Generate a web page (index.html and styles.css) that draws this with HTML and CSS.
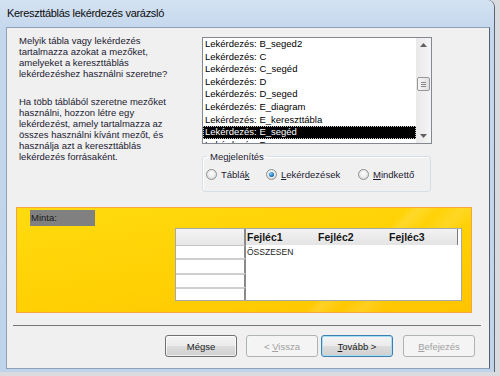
FILE: index.html
```html
<!DOCTYPE html>
<html lang="hu">
<head>
    <meta charset="UTF-8">
    <meta name="viewport" content="width=device-width, initial-scale=1.0">
    <title>Kereszttáblás lekérdezés varázsló</title>
    <link rel="stylesheet" href="styles.css">
</head>
<body>
    <div class="window">
        <div class="titlebar">Kereszttáblás lekérdezés varázsló</div>
        <div class="client">
            <div class="top">
                <div class="intro">
                    <p>Melyik tábla vagy lekérdezés<br>tartalmazza azokat a mezőket,<br>amelyeket a kereszttáblás<br>lekérdezéshez használni szeretne?</p>
                    <p>Ha több táblából szeretne mezőket<br>használni, hozzon létre egy<br>lekérdezést, amely tartalmazza az<br>összes használni kívánt mezőt, és<br>használja azt a kereszttáblás<br>lekérdezés forrásaként.</p>
                </div>
                <div class="side">
                    <div class="listbox">
                        <ul class="items">
                            <li>Lekérdezés: B_seged2</li>
                            <li>Lekérdezés: C</li>
                            <li>Lekérdezés: C_segéd</li>
                            <li>Lekérdezés: D</li>
                            <li>Lekérdezés: D_seged</li>
                            <li>Lekérdezés: E_diagram</li>
                            <li>Lekérdezés: E_kereszttábla</li>
                            <li class="selected">Lekérdezés: E_segéd</li>
                            <li>Lekérdezés: F</li>
                        </ul>
                        <div class="scrollbar">
                            <div class="arrow">
                                <svg width="7" height="4" viewBox="0 0 7 4"><path d="M0 4 L3.5 0 L7 4 Z" fill="#606060"/></svg>
                            </div>
                            <div class="track"><div class="thumb"><i></i><i></i><i></i></div></div>
                            <div class="arrow">
                                <svg width="7" height="4" viewBox="0 0 7 4"><path d="M0 0 L3.5 4 L7 0 Z" fill="#606060"/></svg>
                            </div>
                        </div>
                    </div>
                    <fieldset class="group">
                        <legend>Megjelenítés</legend>
                        <div class="radios">
                            <label class="radio"><span class="dot"></span>Táblá<u>k</u></label>
                            <label class="radio"><span class="dot checked"></span><u>L</u>ekérdezések</label>
                            <label class="radio"><span class="dot"></span><u>M</u>indkettő</label>
                        </div>
                    </fieldset>
                </div>
            </div>

            <div class="sample">
                <div class="minta">Minta:</div>
                <div class="crosstab">
                    <div class="stub-head"></div>
                    <div class="col-head">Fejléc1</div>
                    <div class="col-head">Fejléc2</div>
                    <div class="col-head last">Fejléc3</div>
                    <div class="stub first"></div>
                    <div class="data">ÖSSZESEN</div>
                    <div class="stub"></div>
                    <div class="stub"></div>
                    <div class="stub"></div>
                </div>
            </div>

            <div class="separator"></div>

            <div class="buttons">
                <button class="btn cancel">Mégse</button>
                <button class="btn back" disabled>&lt; <u>V</u>issza</button>
                <button class="btn next"><u>T</u>ovább &gt;</button>
                <button class="btn" disabled><u>B</u>efejezés</button>
            </div>
        </div>
    </div>
</body>
</html>
```

FILE: styles.css
```css
body { margin: 0; background: #d9dbde; font-family: "Liberation Sans", Arial, sans-serif; overflow: hidden; }

.window { width: 494px; height: 372px; box-sizing: border-box; padding: 0 4px 3px 6px; border-radius: 0 7px 0 0; background: linear-gradient(to bottom, #d4e2f2 0, #c4d7ed 30px, #bfd3ea 100%); box-shadow: 1px 0 0 #5c6673, 0 1px 0 #44484e, 0 3px 0 #3a3c40; }
.titlebar { height: 27px; box-sizing: border-box; padding: 7px 0 0 1px; font-size: 11px; line-height: 13px; letter-spacing: -0.3px; color: #0c0c0c; }

.client { height: 342px; box-sizing: border-box; background: #f0f0f0; border: 1px solid #8ea0b6; border-right-color: #56606c; font-size: 9.5px; line-height: 11px; color: #1b2030; }

.top { display: flex; padding: 7px 0 0 12px; height: 164px; box-sizing: border-box; }
.intro { width: 183px; }
.intro p { margin: 0 0 17px; }
.side { padding-top: 2px; }

.listbox { width: 230px; height: 107px; box-sizing: border-box; border: 1px solid #828790; background: #fff; display: flex; }
.items { list-style: none; margin: 0; padding: 0; flex: 1; overflow: hidden; color: #000; }
.items li { height: 12.6px; line-height: 12.6px; padding-left: 2px; white-space: nowrap; }
.items li.selected { background: #000; color: #fff; outline: 1px dotted #c8c8c8; outline-offset: -1px; }

.scrollbar { width: 15px; display: flex; flex-direction: column; background: linear-gradient(to right, #e9e9e9, #f5f5f5); }
.arrow { height: 14px; display: flex; align-items: center; justify-content: center; }
.track { flex: 1; }
.thumb { margin: 25px 0 0 1px; width: 13px; height: 14px; box-sizing: border-box; border: 1px solid #979797; border-radius: 2px; background: linear-gradient(to right, #f5f5f5, #e0e0e0); display: flex; flex-direction: column; align-items: center; justify-content: center; gap: 1px; }
.thumb i { width: 5px; height: 1px; background: #8a8a8a; }

.group { margin: 6.5px 0 0; padding: 6px 0 0 4px; width: 229px; height: 41.5px; box-sizing: border-box; border: 1px solid #d5dfe5; border-radius: 3px; box-shadow: inset 1px 1px 0 #fff; }
.group legend { padding: 0 3px; color: #1b2030; }
.radios { display: grid; grid-template-columns: 60px 92px auto; margin-left: -1px; }
.radio { display: flex; align-items: center; height: 13px; }
.radio u { text-decoration-thickness: 1px; }
.dot { width: 11px; height: 11px; box-sizing: border-box; margin-right: 4px; border-radius: 50%; border: 1px solid #8e8f8f; background: radial-gradient(circle at 50% 40%, #ffffff 0, #e6e6e6 60%, #cfcfcf 100%); display: flex; align-items: center; justify-content: center; }
.dot.checked::after { content: ""; width: 5px; height: 5px; border-radius: 50%; background: radial-gradient(circle at 40% 35%, #7fd0ff 0, #1e73b8 60%, #0d4e8a 100%); }

.sample { margin: 15px 0 0 9px; width: 456px; height: 106px; box-sizing: border-box; padding: 2px 0 0 13px; border: 1px solid #f6a43c; background: linear-gradient(135deg, rgba(255,255,255,0) 70%, rgba(255,255,255,0.14) 72%, rgba(255,255,255,0) 76%, rgba(255,255,255,0.12) 80%, rgba(255,255,255,0) 84%), linear-gradient(170deg, #ffdb0d 0%, #ffd004 55%, #ffc400 100%); }
.minta { width: 65px; height: 16px; box-sizing: border-box; padding: 2px 0 0 1px; background: #808080; color: #1a1a1a; }

.crosstab { margin: 2px 0 0 145px; width: 285px; display: grid; grid-template-columns: 70px 71px 71px 70px; grid-template-rows: 16px 13px 15px 14px 13px; border: 1px solid #a8a8a8; background: #fff; }
.stub-head { background: linear-gradient(#f4f4f4, #e6e6e6); border-right: 2px solid #8a8a8a; }
.col-head { background: linear-gradient(#f2f2f2, #e4e4e4); font-weight: bold; font-size: 10.5px; line-height: 16px; padding-left: 1px; color: #161616; }
.col-head.last { border-right: 1px solid #7c7c7c; }
.stub { border-right: 2px solid #8a8a8a; border-top: 2px solid #cfcfcf; grid-column: 1; }
.stub.first { border-top: 1px solid #c4c4c4; }
.data { grid-column: 2 / 5; grid-row: 2 / 6; padding: 2px 0 0 1px; font-size: 8.5px; line-height: 10px; color: #222; }

.separator { margin: 12px 0 0 6px; width: 468px; border-top: 1px solid #767676; }

.buttons { display: flex; justify-content: flex-end; padding: 9px 14px 0 0; }
.btn { width: 72px; height: 22px; margin: 0; padding: 0; font-family: "Liberation Sans", Arial, sans-serif; font-size: 9.5px; color: #1b1b1b; border: 1px solid #707070; border-radius: 3px; background: linear-gradient(#f4f4f4 0, #ebebeb 50%, #dddddd 51%, #cfcfcf 100%); box-shadow: inset 0 0 0 1px rgba(255,255,255,0.7); }
.btn.cancel { margin-right: 9px; }
.btn.back { margin-right: 3px; }
.btn.next { margin-right: 10px; border-color: #3c7fb1; box-shadow: inset 0 0 0 1px #a9dcf5; }
.btn:disabled { color: #a0a0a0; border-color: #adb2b5; background: #f4f4f4; box-shadow: none; }
```
